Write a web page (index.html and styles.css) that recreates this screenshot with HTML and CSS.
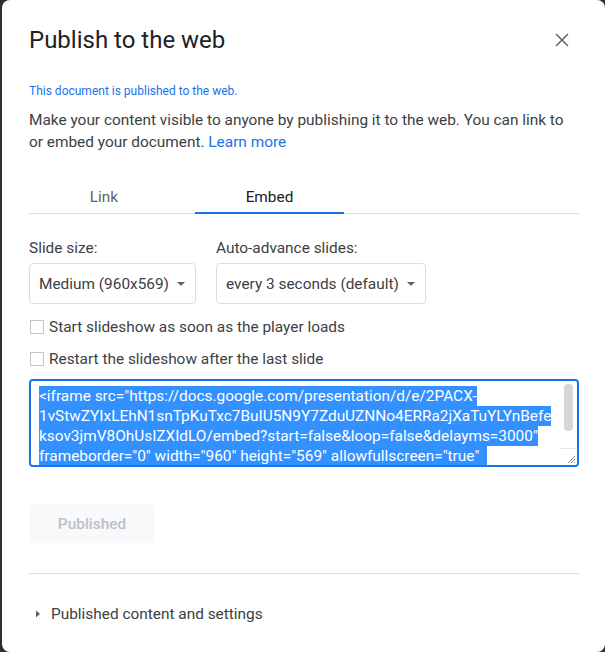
FILE: index.html
```html
<!DOCTYPE html>
<html lang="en">
<head>
    <meta charset="UTF-8">
    <title>Publish to the web</title>
    <link rel="stylesheet" href="styles.css">
</head>
<body>
    <div class="dialog">
        <div class="dialog-header">
            <h1 class="dialog-title">Publish to the web</h1>
            <button class="close-btn" aria-label="Close">
                <svg width="14" height="14" viewBox="0 0 14 14"><path d="M1 1L13 13M13 1L1 13" stroke="#5f6368" stroke-width="1.5"/></svg>
            </button>
        </div>

        <div class="status">This document is published to the web.</div>
        <p class="intro">Make your content visible to anyone by publishing it to the web. You can link to or embed your document. <a href="#">Learn more</a></p>

        <div class="tabs">
            <div class="tab tab-link">Link</div>
            <div class="tab tab-embed active">Embed</div>
        </div>

        <div class="options">
            <div class="field">
                <label>Slide size:</label>
                <div class="select select-size">Medium (960x569)<span class="caret"></span></div>
            </div>
            <div class="field">
                <label>Auto-advance slides:</label>
                <div class="select select-advance">every 3 seconds (default)<span class="caret"></span></div>
            </div>
        </div>

        <div class="check check-first"><span class="box"></span>Start slideshow as soon as the player loads</div>
        <div class="check"><span class="box"></span>Restart the slideshow after the last slide</div>

        <div class="embed-code">
            <div class="code-lines">
                <span class="sel">&lt;iframe src="https://docs.google.com/presentation/d/e/2PACX-</span>
                <span class="sel">1vStwZYIxLEhN1snTpKuTxc7BuIU5N9Y7ZduUZNNo4ERRa2jXaTuYLYnBefe</span>
                <span class="sel">ksov3jmV8OhUsIZXIdLO/embed?start=false&amp;loop=false&amp;delayms=3000"</span>
                <span class="sel">frameborder="0" width="960" height="569" allowfullscreen="true"  </span>
            </div>
            <div class="scroll-thumb"></div>
            <div class="scroll-end"></div>
            <svg class="grip" width="9" height="9" viewBox="0 0 9 9"><path d="M8 1L1 8M8 4L4 8M8 7L7 8" stroke="#8a8a8a" stroke-width="1"/></svg>
        </div>

        <button class="publish-btn" disabled>Published</button>

        <hr class="divider">

        <div class="expander">
            <svg width="10" height="10" viewBox="0 0 10 10"><path d="M3 1.5L7 5L3 8.5Z" fill="#5f6368"/></svg>
            Published content and settings
        </div>
    </div>
</body>
</html>
```
FILE: styles.css
```css
* {
    margin: 0;
    padding: 0;
    box-sizing: border-box;
}

body {
    background: #2e2f30;
    font-family: Roboto, Arial, sans-serif;
    color: #3c4043;
    height: 652px;
    overflow: hidden;
}

.dialog {
    margin-left: 2px;
    width: 603px;
    height: 652px;
    background: #fff;
    border-radius: 8px;
    padding: 24px 26px 0 27px;
}

.dialog-header {
    display: flex;
    justify-content: space-between;
    align-items: center;
    height: 32px;
}

.dialog-title {
    font-size: 24px;
    font-weight: 400;
    color: #202124;
    line-height: 32px;
}

.close-btn {
    border: none;
    background: none;
    width: 24px;
    height: 24px;
    display: flex;
    align-items: center;
    justify-content: center;
    margin-right: 5px;
}

.status {
    margin-top: 27px;
    font-size: 12px;
    line-height: 16px;
    color: #1a73e8;
}

.intro {
    margin-top: 10px;
    font-size: 15.4px;
    line-height: 22px;
    color: #3c4043;
}

.intro a {
    color: #1a73e8;
    text-decoration: none;
}

.tabs {
    margin-top: 24px;
    display: flex;
    gap: 16px;
    box-shadow: inset 0 -1px 0 #dadce0;
    height: 37px;
}

.tab {
    font-size: 15.4px;
    text-align: center;
    line-height: 20px;
    padding-top: 10px;
    height: 37px;
    color: #5f6368;
}

.tab-link { width: 150px; }
.tab-embed { width: 149px; }

.tab.active {
    color: #202124;
    border-bottom: 2px solid #1a73e8;
}

.options {
    margin-top: 24px;
    display: flex;
    gap: 20px;
}

.field label {
    display: block;
    font-size: 15.4px;
    line-height: 20px;
    color: #3c4043;
}

.select {
    margin-top: 5px;
    height: 41px;
    border: 1px solid #dadce0;
    border-radius: 4px;
    display: flex;
    align-items: center;
    padding: 0 9px;
    font-size: 15.4px;
    color: #3c4043;
    gap: 8px;
}

.select-size { width: 167px; }
.select-advance { width: 210px; }

.caret {
    width: 0;
    height: 0;
    border-left: 4.5px solid transparent;
    border-right: 4.5px solid transparent;
    border-top: 4.5px solid #5f6368;
}

.check {
    display: flex;
    align-items: center;
    gap: 5px;
    font-size: 15.4px;
    color: #3c4043;
    line-height: 20px;
    margin-top: 12px;
}

.check-first { margin-top: 13px; }

.box {
    width: 14px;
    height: 14px;
    border: 1px solid #c4c7c9;
    margin-left: 1px;
}

.embed-code {
    position: relative;
    margin-top: 10px;
    height: 88px;
    border: 2px solid #1a73e8;
    border-radius: 4px;
    padding: 5px 20px 0 8px;
    overflow: hidden;
}

.code-lines {
    font-size: 15.4px;
    line-height: 20px;
}

.sel {
    display: block;
    width: fit-content;
    background: #3390ff;
    color: #fff;
    white-space: pre;
}

.scroll-thumb {
    position: absolute;
    right: 4px;
    top: 3px;
    width: 9px;
    height: 47px;
    background: #d6d6d6;
    border-radius: 4px;
}

.scroll-end {
    position: absolute;
    right: 0;
    top: 67px;
    width: 17px;
    border-top: 1px solid #e8e8e8;
}

.grip {
    position: absolute;
    right: 1px;
    bottom: 1px;
}

.publish-btn {
    display: block;
    margin-top: 37px;
    width: 126px;
    height: 39px;
    border: none;
    border-radius: 4px;
    background: #f8f9fa;
    color: #bdc1c6;
    font-family: Roboto, Arial, sans-serif;
    font-size: 15.4px;
    font-weight: 500;
}

.divider {
    margin-top: 30px;
    border: none;
    border-top: 1px solid #dadce0;
}

.expander {
    margin-top: 30px;
    display: flex;
    align-items: center;
    gap: 8px;
    font-size: 15.4px;
    line-height: 20px;
    color: #3c4043;
    padding-left: 4px;
}
```
